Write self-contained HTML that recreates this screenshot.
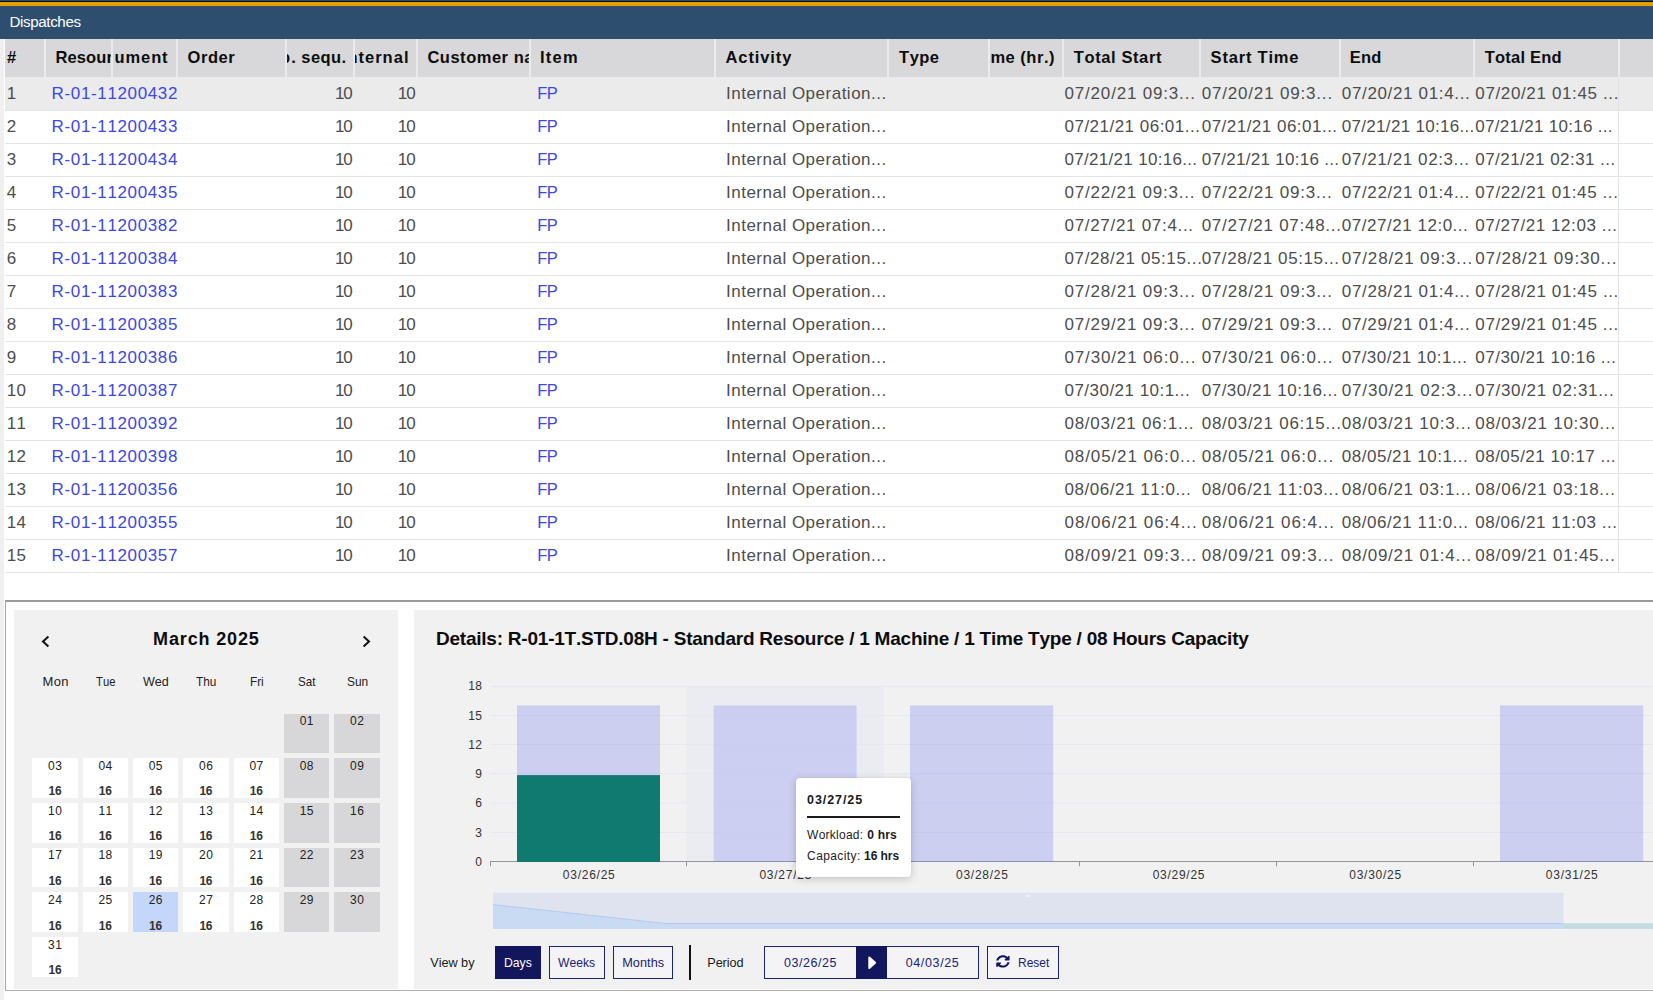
<!DOCTYPE html>
<html lang="en">
<head>
<meta charset="utf-8">
<title>Dispatches</title>
<style>
html,body{margin:0;padding:0;overflow:hidden;}
body{width:1653px;height:1000px;position:relative;overflow:hidden;background:#fff;font-family:"Liberation Sans",sans-serif;}
.a{position:absolute;}
.t{position:absolute;white-space:nowrap;line-height:1;font-kerning:none;}
.c{position:absolute;overflow:hidden;}
.c .t{position:absolute;}
#strip{left:0;top:39px;width:4px;height:961px;background:#f0f0f0;}
#bar0{left:0;top:0;width:1653px;height:1px;background:#2e4a66;}
#bar1{left:0;top:1px;width:1653px;height:1px;background:#0a0a0a;}
#bar2{left:0;top:2px;width:1653px;height:4px;background:#e59e00;}
#bar3{left:0;top:6px;width:1653px;height:33px;background:#2d4e6e;}
#title{left:9.5px;top:13.9px;font-size:15.2px;color:#fff;letter-spacing:-0.4px;line-height:1;white-space:nowrap;}
#hdr{left:5px;top:39px;width:1648px;height:38px;background:#d8d8da;}
.sep{position:absolute;top:39px;width:2px;height:38px;background:#ebebec;}
.row{position:absolute;left:5px;width:1648px;height:33px;}
.row.hl{background:#ebebeb;}
.rl{position:absolute;left:5px;width:1648px;height:1px;background:#e5e5e5;}
#vline{left:1618px;top:77px;width:1px;height:496px;background:#e2e2e2;}
#panel{left:5px;top:600px;width:1647px;height:388px;border-top:2px solid #9a9a9a;border-left:1px solid #a6a6a6;border-bottom:1px solid #b0b0b0;background:#fff;}
#cal{left:14px;top:610px;width:384px;height:379px;background:#f1f1f1;}
#chart{left:414px;top:610px;width:1239px;height:379px;background:#f1f1f1;}
.cc{position:absolute;width:45.4px;height:39.7px;background:#fff;}
.cc.we{background:#d7d7d9;}
.cc.sel{background:#c5d6fb;}
.btn{position:absolute;top:946px;height:31px;border:1px solid #1a2272;background:#f4f4f6;}
</style>
</head>
<body>
<div class="a" id="bar0"></div><div class="a" id="bar1"></div><div class="a" id="bar2"></div><div class="a" id="bar3"></div>
<div class="a" id="title">Dispatches</div>
<div class="a" id="strip"></div>
<div class="a" id="hdr"></div>
<div class="sep" style="left:44px"></div>
<div class="sep" style="left:111px"></div>
<div class="sep" style="left:176px"></div>
<div class="sep" style="left:285px"></div>
<div class="sep" style="left:353px"></div>
<div class="sep" style="left:416px"></div>
<div class="sep" style="left:529px"></div>
<div class="sep" style="left:714px"></div>
<div class="sep" style="left:887px"></div>
<div class="sep" style="left:988px"></div>
<div class="sep" style="left:1062px"></div>
<div class="sep" style="left:1199px"></div>
<div class="sep" style="left:1339px"></div>
<div class="sep" style="left:1473px"></div>
<div class="sep" style="left:1618px"></div>
<div class="row hl" style="top:77px"></div>
<div class="rl" style="top:110px"></div>
<div class="rl" style="top:143px"></div>
<div class="rl" style="top:176px"></div>
<div class="rl" style="top:209px"></div>
<div class="rl" style="top:242px"></div>
<div class="rl" style="top:275px"></div>
<div class="rl" style="top:308px"></div>
<div class="rl" style="top:341px"></div>
<div class="rl" style="top:374px"></div>
<div class="rl" style="top:407px"></div>
<div class="rl" style="top:440px"></div>
<div class="rl" style="top:473px"></div>
<div class="rl" style="top:506px"></div>
<div class="rl" style="top:539px"></div>
<div class="rl" style="top:572px"></div>
<div class="a" id="vline"></div>

<div class="a" id="panel"></div>
<div class="a" id="cal"></div>
<div class="a" id="chart"></div>
<div class="cc we" style="left:283.95px;top:713.50px"></div>
<div class="cc we" style="left:334.28px;top:713.50px"></div>
<div class="cc" style="left:32.30px;top:758.20px"></div>
<div class="cc" style="left:82.63px;top:758.20px"></div>
<div class="cc" style="left:132.96px;top:758.20px"></div>
<div class="cc" style="left:183.29px;top:758.20px"></div>
<div class="cc" style="left:233.62px;top:758.20px"></div>
<div class="cc we" style="left:283.95px;top:758.20px"></div>
<div class="cc we" style="left:334.28px;top:758.20px"></div>
<div class="cc" style="left:32.30px;top:802.90px"></div>
<div class="cc" style="left:82.63px;top:802.90px"></div>
<div class="cc" style="left:132.96px;top:802.90px"></div>
<div class="cc" style="left:183.29px;top:802.90px"></div>
<div class="cc" style="left:233.62px;top:802.90px"></div>
<div class="cc we" style="left:283.95px;top:802.90px"></div>
<div class="cc we" style="left:334.28px;top:802.90px"></div>
<div class="cc" style="left:32.30px;top:847.60px"></div>
<div class="cc" style="left:82.63px;top:847.60px"></div>
<div class="cc" style="left:132.96px;top:847.60px"></div>
<div class="cc" style="left:183.29px;top:847.60px"></div>
<div class="cc" style="left:233.62px;top:847.60px"></div>
<div class="cc we" style="left:283.95px;top:847.60px"></div>
<div class="cc we" style="left:334.28px;top:847.60px"></div>
<div class="cc" style="left:32.30px;top:892.30px"></div>
<div class="cc" style="left:82.63px;top:892.30px"></div>
<div class="cc sel" style="left:132.96px;top:892.30px"></div>
<div class="cc" style="left:183.29px;top:892.30px"></div>
<div class="cc" style="left:233.62px;top:892.30px"></div>
<div class="cc we" style="left:283.95px;top:892.30px"></div>
<div class="cc we" style="left:334.28px;top:892.30px"></div>
<div class="cc" style="left:32.30px;top:937.00px"></div>

<!-- calendar chevrons -->
<svg class="a" style="left:38px;top:632px" width="16" height="20" viewBox="0 0 16 20"><path d="M10.4 4.6 L5 9.6 L10.4 14.6" fill="none" stroke="#111" stroke-width="2" stroke-linecap="butt" stroke-linejoin="miter"/></svg>
<svg class="a" style="left:358px;top:632px" width="16" height="20" viewBox="0 0 16 20"><path d="M5.6 4.6 L11 9.6 L5.6 14.6" fill="none" stroke="#111" stroke-width="2" stroke-linecap="butt" stroke-linejoin="miter"/></svg>

<!-- chart svg -->
<svg class="a" style="left:414px;top:610px" width="1239" height="379" viewBox="414 610 1239 379">
  <!-- hover band -->
  <rect x="686.6" y="686" width="197" height="175.5" fill="#ebecf1"/>
  <!-- grid -->
  <g stroke="#e6e9f2" stroke-width="1">
    <line x1="490.5" x2="1653" y1="686.5" y2="686.5"/>
    <line x1="490.5" x2="1653" y1="715.5" y2="715.5"/>
    <line x1="490.5" x2="1653" y1="744.5" y2="744.5"/>
    <line x1="490.5" x2="1653" y1="773.5" y2="773.5"/>
    <line x1="490.5" x2="1653" y1="803" y2="803"/>
    <line x1="490.5" x2="1653" y1="832.5" y2="832.5"/>
  </g>
  <!-- axis -->
  <g stroke="#94959b" stroke-width="1">
    <line x1="490" x2="1653" y1="861.5" y2="861.5"/>
    <line x1="490.5" x2="490.5" y1="861" y2="866.3"/>
    <line x1="686.5" x2="686.5" y1="861" y2="866.3"/>
    <line x1="883.5" x2="883.5" y1="861" y2="866.3"/>
    <line x1="1079.5" x2="1079.5" y1="861" y2="866.3"/>
    <line x1="1276.5" x2="1276.5" y1="861" y2="866.3"/>
    <line x1="1473.5" x2="1473.5" y1="861" y2="866.3"/>
  </g>
  <!-- capacity bars -->
  <g fill="rgba(121,128,241,0.3)">
    <rect x="517" y="705.4" width="143" height="156.6"/>
    <rect x="713.6" y="705.4" width="143" height="156.6" fill="rgba(121,128,241,0.27)"/>
    <rect x="910" y="705.4" width="143.2" height="156.6"/>
    <rect x="1500" y="705.4" width="143.2" height="156.6"/>
  </g>
  <rect x="517" y="775.1" width="143" height="86.9" fill="#107a71"/>
  <!-- slider -->
  <rect x="493" y="892.7" width="1070.6" height="36.2" fill="#dee3ef"/>
  <path d="M493 904.6 L666.5 923.6 L1563.6 923.6 L1563.6 928.9 L493 928.9 Z" fill="#c9dbf2"/>
  <path d="M493 904.6 L666.5 923.6 L1563.6 923.6" fill="none" stroke="#b3c9f3" stroke-width="1"/>
  <rect x="1563.6" y="923.2" width="89.4" height="5.7" fill="#c3dcdf"/>
  <g stroke="#fff" stroke-width="0.6" opacity="0.9"><line x1="1026.6" x2="1026.6" y1="894.6" y2="897"/><line x1="1028" x2="1028" y1="894.6" y2="897"/><line x1="1029.4" x2="1029.4" y1="894.6" y2="897"/></g>
</svg>

<!-- controls -->
<div class="a" style="left:495px;top:946px;width:46px;height:33px;background:#12165c"></div>
<div class="btn" style="left:549px;width:54px"></div>
<div class="btn" style="left:613px;width:58px"></div>
<div class="a" style="left:689px;top:945px;width:2px;height:35px;background:#111"></div>
<div class="btn" style="left:764px;width:213px"></div>
<div class="a" style="left:856px;top:946px;width:31px;height:33px;background:#12165c"></div>
<svg class="a" style="left:864px;top:952px" width="16" height="22" viewBox="0 0 16 22"><path d="M5.3 5.6 L11.1 10.8 L5.3 16 Z" fill="#fff" stroke="#fff" stroke-width="2" stroke-linejoin="round"/></svg>
<div class="btn" style="left:987px;width:70px"></div>
<svg class="a" style="left:996.1px;top:955.4px" width="13.8" height="12.8" viewBox="0 0 512 512" preserveAspectRatio="none"><path fill="#12165c" d="M370.72 133.28C339.458 104.008 298.888 87.962 255.848 88c-77.458.068-144.328 53.178-162.791 126.85-1.344 5.363-6.122 9.15-11.651 9.15H24.103c-7.498 0-13.194-6.807-11.807-14.176C33.933 94.924 134.813 8 256 8c66.448 0 126.791 26.136 171.315 68.685L463.03 40.97C478.149 25.851 504 36.559 504 57.941V192c0 13.255-10.745 24-24 24H345.941c-21.382 0-32.09-25.851-16.971-40.971l41.75-41.749zM32 296h134.059c21.382 0 32.09 25.851 16.971 40.971l-41.75 41.75c31.262 29.273 71.835 45.319 114.876 45.28 77.418-.07 144.315-53.144 162.787-126.849 1.344-5.363 6.122-9.15 11.651-9.15h57.304c7.498 0 13.194 6.807 11.807 14.176C478.067 417.076 377.187 504 256 504c-66.448 0-126.791-26.136-171.315-68.685L48.97 471.03C33.851 486.149 8 475.441 8 454.059V320c0-13.255 10.745-24 24-24z"/></svg>

<span id="t0" class="t" style="font-size:16.5px;font-weight:700;color:#0d0d0d;letter-spacing:0.312px;left:7.00px;top:49.33px;">#</span>
<div class="c" style="left:46.00px;top:49.33px;width:65.00px;height:21.45px"><span id="t1" class="t" style="font-size:16.5px;font-weight:700;color:#0d0d0d;letter-spacing:0.120px;left:9.40px;top:0">Resource</span></div>
<span id="t2" class="t" style="font-size:16.5px;font-weight:700;color:#0d0d0d;letter-spacing:0.875px;left:114.60px;top:49.33px;">ument</span>
<span id="t3" class="t" style="font-size:16.5px;font-weight:700;color:#0d0d0d;letter-spacing:0.566px;left:187.50px;top:49.33px;">Order</span>
<span id="t4" class="t" style="font-size:16.5px;font-weight:700;color:#0d0d0d;letter-spacing:0.439px;left:291.30px;top:49.33px;">. sequ.</span>
<div class="c" style="left:287.20px;top:49.33px;width:4.80px;height:21.45px"><span id="t5" class="t" style="font-size:16.5px;font-weight:700;color:#0d0d0d;right:2.00px;top:0">p</span></div>
<span id="t6" class="t" style="font-size:16.5px;font-weight:700;color:#0d0d0d;letter-spacing:1.033px;left:358.40px;top:49.33px;">ternal</span>
<div class="c" style="left:355.40px;top:49.33px;width:3.60px;height:21.45px"><span id="t7" class="t" style="font-size:16.5px;font-weight:700;color:#0d0d0d;right:1.40px;top:0">n</span></div>
<div class="c" style="left:418.00px;top:49.33px;width:111.40px;height:21.45px"><span id="t8" class="t" style="font-size:16.5px;font-weight:700;color:#0d0d0d;letter-spacing:0.520px;left:9.40px;top:0">Customer name</span></div>
<span id="t9" class="t" style="font-size:16.5px;font-weight:700;color:#0d0d0d;letter-spacing:1.254px;left:539.90px;top:49.33px;">Item</span>
<span id="t10" class="t" style="font-size:16.5px;font-weight:700;color:#0d0d0d;letter-spacing:0.899px;left:725.50px;top:49.33px;">Activity</span>
<span id="t11" class="t" style="font-size:16.5px;font-weight:700;color:#0d0d0d;letter-spacing:0.461px;left:899.10px;top:49.33px;">Type</span>
<span id="t12" class="t" style="font-size:16.5px;font-weight:700;color:#0d0d0d;letter-spacing:0.512px;left:990.40px;top:49.33px;">me (hr.)</span>
<span id="t13" class="t" style="font-size:16.5px;font-weight:700;color:#0d0d0d;letter-spacing:0.601px;left:1073.80px;top:49.33px;">Total Start</span>
<span id="t14" class="t" style="font-size:16.5px;font-weight:700;color:#0d0d0d;letter-spacing:0.801px;left:1210.60px;top:49.33px;">Start Time</span>
<span id="t15" class="t" style="font-size:16.5px;font-weight:700;color:#0d0d0d;letter-spacing:0.164px;left:1349.80px;top:49.33px;">End</span>
<span id="t16" class="t" style="font-size:16.5px;font-weight:700;color:#0d0d0d;letter-spacing:0.191px;left:1484.80px;top:49.33px;">Total End</span>
<span id="t17" class="t" style="font-size:17px;color:#4d4d4d;letter-spacing:0.400px;left:6.70px;top:84.61px;">1</span>
<span id="t18" class="t" style="font-size:17px;color:#3d46e6;letter-spacing:0.637px;left:51.60px;top:84.61px;">R-01-11200432</span>
<span id="t19" class="t" style="font-size:17px;color:#4d4d4d;letter-spacing:-1.122px;right:1301.32px;top:84.61px;">10</span>
<span id="t20" class="t" style="font-size:17px;color:#4d4d4d;letter-spacing:-1.122px;right:1238.52px;top:84.61px;">10</span>
<span id="t21" class="t" style="font-size:16.5px;color:#3d46e6;letter-spacing:-0.400px;left:537.20px;top:85.03px;">FP</span>
<span id="t22" class="t" style="font-size:17px;color:#4d4d4d;letter-spacing:0.497px;left:726.00px;top:84.61px;">Internal Operation...</span>
<span id="t23" class="t" style="font-size:17px;color:#4d4d4d;letter-spacing:0.818px;left:1064.50px;top:84.61px;">07/20/21 09:3...</span>
<span id="t24" class="t" style="font-size:17px;color:#4d4d4d;letter-spacing:0.818px;left:1201.70px;top:84.61px;">07/20/21 09:3...</span>
<span id="t25" class="t" style="font-size:17px;color:#4d4d4d;letter-spacing:0.655px;left:1341.80px;top:84.61px;">07/20/21 01:4...</span>
<span id="t26" class="t" style="font-size:17px;color:#4d4d4d;letter-spacing:0.633px;left:1475.30px;top:84.61px;">07/20/21 01:45 ...</span>
<span id="t27" class="t" style="font-size:17px;color:#4d4d4d;letter-spacing:0.400px;left:6.70px;top:117.61px;">2</span>
<span id="t28" class="t" style="font-size:17px;color:#3d46e6;letter-spacing:0.637px;left:51.60px;top:117.61px;">R-01-11200433</span>
<span id="t29" class="t" style="font-size:17px;color:#4d4d4d;letter-spacing:-1.122px;right:1301.32px;top:117.61px;">10</span>
<span id="t30" class="t" style="font-size:17px;color:#4d4d4d;letter-spacing:-1.122px;right:1238.52px;top:117.61px;">10</span>
<span id="t31" class="t" style="font-size:16.5px;color:#3d46e6;letter-spacing:-0.400px;left:537.20px;top:118.03px;">FP</span>
<span id="t32" class="t" style="font-size:17px;color:#4d4d4d;letter-spacing:0.497px;left:726.00px;top:117.61px;">Internal Operation...</span>
<span id="t33" class="t" style="font-size:17px;color:#4d4d4d;letter-spacing:0.486px;left:1064.50px;top:117.61px;">07/21/21 06:01...</span>
<span id="t34" class="t" style="font-size:17px;color:#4d4d4d;letter-spacing:0.486px;left:1201.70px;top:117.61px;">07/21/21 06:01...</span>
<span id="t35" class="t" style="font-size:17px;color:#4d4d4d;letter-spacing:0.304px;left:1341.80px;top:117.61px;">07/21/21 10:16...</span>
<span id="t36" class="t" style="font-size:17px;color:#4d4d4d;letter-spacing:0.292px;left:1475.30px;top:117.61px;">07/21/21 10:16 ...</span>
<span id="t37" class="t" style="font-size:17px;color:#4d4d4d;letter-spacing:0.400px;left:6.70px;top:150.61px;">3</span>
<span id="t38" class="t" style="font-size:17px;color:#3d46e6;letter-spacing:0.637px;left:51.60px;top:150.61px;">R-01-11200434</span>
<span id="t39" class="t" style="font-size:17px;color:#4d4d4d;letter-spacing:-1.122px;right:1301.32px;top:150.61px;">10</span>
<span id="t40" class="t" style="font-size:17px;color:#4d4d4d;letter-spacing:-1.122px;right:1238.52px;top:150.61px;">10</span>
<span id="t41" class="t" style="font-size:16.5px;color:#3d46e6;letter-spacing:-0.400px;left:537.20px;top:151.03px;">FP</span>
<span id="t42" class="t" style="font-size:17px;color:#4d4d4d;letter-spacing:0.497px;left:726.00px;top:150.61px;">Internal Operation...</span>
<span id="t43" class="t" style="font-size:17px;color:#4d4d4d;letter-spacing:0.304px;left:1064.50px;top:150.61px;">07/21/21 10:16...</span>
<span id="t44" class="t" style="font-size:17px;color:#4d4d4d;letter-spacing:0.292px;left:1201.70px;top:150.61px;">07/21/21 10:16 ...</span>
<span id="t45" class="t" style="font-size:17px;color:#4d4d4d;letter-spacing:0.601px;left:1341.80px;top:150.61px;">07/21/21 02:3...</span>
<span id="t46" class="t" style="font-size:17px;color:#4d4d4d;letter-spacing:0.443px;left:1475.30px;top:150.61px;">07/21/21 02:31 ...</span>
<span id="t47" class="t" style="font-size:17px;color:#4d4d4d;letter-spacing:0.400px;left:6.70px;top:183.61px;">4</span>
<span id="t48" class="t" style="font-size:17px;color:#3d46e6;letter-spacing:0.637px;left:51.60px;top:183.61px;">R-01-11200435</span>
<span id="t49" class="t" style="font-size:17px;color:#4d4d4d;letter-spacing:-1.122px;right:1301.32px;top:183.61px;">10</span>
<span id="t50" class="t" style="font-size:17px;color:#4d4d4d;letter-spacing:-1.122px;right:1238.52px;top:183.61px;">10</span>
<span id="t51" class="t" style="font-size:16.5px;color:#3d46e6;letter-spacing:-0.400px;left:537.20px;top:184.03px;">FP</span>
<span id="t52" class="t" style="font-size:17px;color:#4d4d4d;letter-spacing:0.497px;left:726.00px;top:183.61px;">Internal Operation...</span>
<span id="t53" class="t" style="font-size:17px;color:#4d4d4d;letter-spacing:0.786px;left:1064.50px;top:183.61px;">07/22/21 09:3...</span>
<span id="t54" class="t" style="font-size:17px;color:#4d4d4d;letter-spacing:0.786px;left:1201.70px;top:183.61px;">07/22/21 09:3...</span>
<span id="t55" class="t" style="font-size:17px;color:#4d4d4d;letter-spacing:0.623px;left:1341.80px;top:183.61px;">07/22/21 01:4...</span>
<span id="t56" class="t" style="font-size:17px;color:#4d4d4d;letter-spacing:0.605px;left:1475.30px;top:183.61px;">07/22/21 01:45 ...</span>
<span id="t57" class="t" style="font-size:17px;color:#4d4d4d;letter-spacing:0.400px;left:6.70px;top:216.61px;">5</span>
<span id="t58" class="t" style="font-size:17px;color:#3d46e6;letter-spacing:0.637px;left:51.60px;top:216.61px;">R-01-11200382</span>
<span id="t59" class="t" style="font-size:17px;color:#4d4d4d;letter-spacing:-1.122px;right:1301.32px;top:216.61px;">10</span>
<span id="t60" class="t" style="font-size:17px;color:#4d4d4d;letter-spacing:-1.122px;right:1238.52px;top:216.61px;">10</span>
<span id="t61" class="t" style="font-size:16.5px;color:#3d46e6;letter-spacing:-0.400px;left:537.20px;top:217.03px;">FP</span>
<span id="t62" class="t" style="font-size:17px;color:#4d4d4d;letter-spacing:0.497px;left:726.00px;top:216.61px;">Internal Operation...</span>
<span id="t63" class="t" style="font-size:17px;color:#4d4d4d;letter-spacing:0.696px;left:1064.50px;top:216.61px;">07/27/21 07:4...</span>
<span id="t64" class="t" style="font-size:17px;color:#4d4d4d;letter-spacing:0.730px;left:1201.70px;top:216.61px;">07/27/21 07:48...</span>
<span id="t65" class="t" style="font-size:17px;color:#4d4d4d;letter-spacing:0.525px;left:1341.80px;top:216.61px;">07/27/21 12:0...</span>
<span id="t66" class="t" style="font-size:17px;color:#4d4d4d;letter-spacing:0.547px;left:1475.30px;top:216.61px;">07/27/21 12:03 ...</span>
<span id="t67" class="t" style="font-size:17px;color:#4d4d4d;letter-spacing:0.400px;left:6.70px;top:249.61px;">6</span>
<span id="t68" class="t" style="font-size:17px;color:#3d46e6;letter-spacing:0.637px;left:51.60px;top:249.61px;">R-01-11200384</span>
<span id="t69" class="t" style="font-size:17px;color:#4d4d4d;letter-spacing:-1.122px;right:1301.32px;top:249.61px;">10</span>
<span id="t70" class="t" style="font-size:17px;color:#4d4d4d;letter-spacing:-1.122px;right:1238.52px;top:249.61px;">10</span>
<span id="t71" class="t" style="font-size:16.5px;color:#3d46e6;letter-spacing:-0.400px;left:537.20px;top:250.03px;">FP</span>
<span id="t72" class="t" style="font-size:17px;color:#4d4d4d;letter-spacing:0.497px;left:726.00px;top:249.61px;">Internal Operation...</span>
<span id="t73" class="t" style="font-size:17px;color:#4d4d4d;letter-spacing:0.611px;left:1064.50px;top:249.61px;">07/28/21 05:15...</span>
<span id="t74" class="t" style="font-size:17px;color:#4d4d4d;letter-spacing:0.611px;left:1201.70px;top:249.61px;">07/28/21 05:15...</span>
<span id="t75" class="t" style="font-size:17px;color:#4d4d4d;letter-spacing:0.813px;left:1341.80px;top:249.61px;">07/28/21 09:3...</span>
<span id="t76" class="t" style="font-size:17px;color:#4d4d4d;letter-spacing:0.845px;left:1475.30px;top:249.61px;">07/28/21 09:30...</span>
<span id="t77" class="t" style="font-size:17px;color:#4d4d4d;letter-spacing:0.400px;left:6.70px;top:282.61px;">7</span>
<span id="t78" class="t" style="font-size:17px;color:#3d46e6;letter-spacing:0.637px;left:51.60px;top:282.61px;">R-01-11200383</span>
<span id="t79" class="t" style="font-size:17px;color:#4d4d4d;letter-spacing:-1.122px;right:1301.32px;top:282.61px;">10</span>
<span id="t80" class="t" style="font-size:17px;color:#4d4d4d;letter-spacing:-1.122px;right:1238.52px;top:282.61px;">10</span>
<span id="t81" class="t" style="font-size:16.5px;color:#3d46e6;letter-spacing:-0.400px;left:537.20px;top:283.03px;">FP</span>
<span id="t82" class="t" style="font-size:17px;color:#4d4d4d;letter-spacing:0.497px;left:726.00px;top:282.61px;">Internal Operation...</span>
<span id="t83" class="t" style="font-size:17px;color:#4d4d4d;letter-spacing:0.813px;left:1064.50px;top:282.61px;">07/28/21 09:3...</span>
<span id="t84" class="t" style="font-size:17px;color:#4d4d4d;letter-spacing:0.813px;left:1201.70px;top:282.61px;">07/28/21 09:3...</span>
<span id="t85" class="t" style="font-size:17px;color:#4d4d4d;letter-spacing:0.649px;left:1341.80px;top:282.61px;">07/28/21 01:4...</span>
<span id="t86" class="t" style="font-size:17px;color:#4d4d4d;letter-spacing:0.628px;left:1475.30px;top:282.61px;">07/28/21 01:45 ...</span>
<span id="t87" class="t" style="font-size:17px;color:#4d4d4d;letter-spacing:0.400px;left:6.70px;top:315.61px;">8</span>
<span id="t88" class="t" style="font-size:17px;color:#3d46e6;letter-spacing:0.637px;left:51.60px;top:315.61px;">R-01-11200385</span>
<span id="t89" class="t" style="font-size:17px;color:#4d4d4d;letter-spacing:-1.122px;right:1301.32px;top:315.61px;">10</span>
<span id="t90" class="t" style="font-size:17px;color:#4d4d4d;letter-spacing:-1.122px;right:1238.52px;top:315.61px;">10</span>
<span id="t91" class="t" style="font-size:16.5px;color:#3d46e6;letter-spacing:-0.400px;left:537.20px;top:316.03px;">FP</span>
<span id="t92" class="t" style="font-size:17px;color:#4d4d4d;letter-spacing:0.497px;left:726.00px;top:315.61px;">Internal Operation...</span>
<span id="t93" class="t" style="font-size:17px;color:#4d4d4d;letter-spacing:0.809px;left:1064.50px;top:315.61px;">07/29/21 09:3...</span>
<span id="t94" class="t" style="font-size:17px;color:#4d4d4d;letter-spacing:0.809px;left:1201.70px;top:315.61px;">07/29/21 09:3...</span>
<span id="t95" class="t" style="font-size:17px;color:#4d4d4d;letter-spacing:0.646px;left:1341.80px;top:315.61px;">07/29/21 01:4...</span>
<span id="t96" class="t" style="font-size:17px;color:#4d4d4d;letter-spacing:0.625px;left:1475.30px;top:315.61px;">07/29/21 01:45 ...</span>
<span id="t97" class="t" style="font-size:17px;color:#4d4d4d;letter-spacing:0.400px;left:6.70px;top:348.61px;">9</span>
<span id="t98" class="t" style="font-size:17px;color:#3d46e6;letter-spacing:0.637px;left:51.60px;top:348.61px;">R-01-11200386</span>
<span id="t99" class="t" style="font-size:17px;color:#4d4d4d;letter-spacing:-1.122px;right:1301.32px;top:348.61px;">10</span>
<span id="t100" class="t" style="font-size:17px;color:#4d4d4d;letter-spacing:-1.122px;right:1238.52px;top:348.61px;">10</span>
<span id="t101" class="t" style="font-size:16.5px;color:#3d46e6;letter-spacing:-0.400px;left:537.20px;top:349.03px;">FP</span>
<span id="t102" class="t" style="font-size:17px;color:#4d4d4d;letter-spacing:0.497px;left:726.00px;top:348.61px;">Internal Operation...</span>
<span id="t103" class="t" style="font-size:17px;color:#4d4d4d;letter-spacing:0.850px;left:1064.50px;top:348.61px;">07/30/21 06:0...</span>
<span id="t104" class="t" style="font-size:17px;color:#4d4d4d;letter-spacing:0.850px;left:1201.70px;top:348.61px;">07/30/21 06:0...</span>
<span id="t105" class="t" style="font-size:17px;color:#4d4d4d;letter-spacing:0.471px;left:1341.80px;top:348.61px;">07/30/21 10:1...</span>
<span id="t106" class="t" style="font-size:17px;color:#4d4d4d;letter-spacing:0.491px;left:1475.30px;top:348.61px;">07/30/21 10:16 ...</span>
<span id="t107" class="t" style="font-size:17px;color:#4d4d4d;letter-spacing:0.400px;left:6.70px;top:381.61px;">10</span>
<span id="t108" class="t" style="font-size:17px;color:#3d46e6;letter-spacing:0.637px;left:51.60px;top:381.61px;">R-01-11200387</span>
<span id="t109" class="t" style="font-size:17px;color:#4d4d4d;letter-spacing:-1.122px;right:1301.32px;top:381.61px;">10</span>
<span id="t110" class="t" style="font-size:17px;color:#4d4d4d;letter-spacing:-1.122px;right:1238.52px;top:381.61px;">10</span>
<span id="t111" class="t" style="font-size:16.5px;color:#3d46e6;letter-spacing:-0.400px;left:537.20px;top:382.03px;">FP</span>
<span id="t112" class="t" style="font-size:17px;color:#4d4d4d;letter-spacing:0.497px;left:726.00px;top:381.61px;">Internal Operation...</span>
<span id="t113" class="t" style="font-size:17px;color:#4d4d4d;letter-spacing:0.471px;left:1064.50px;top:381.61px;">07/30/21 10:1...</span>
<span id="t114" class="t" style="font-size:17px;color:#4d4d4d;letter-spacing:0.516px;left:1201.70px;top:381.61px;">07/30/21 10:16...</span>
<span id="t115" class="t" style="font-size:17px;color:#4d4d4d;letter-spacing:0.827px;left:1341.80px;top:381.61px;">07/30/21 02:3...</span>
<span id="t116" class="t" style="font-size:17px;color:#4d4d4d;letter-spacing:0.677px;left:1475.30px;top:381.61px;">07/30/21 02:31...</span>
<span id="t117" class="t" style="font-size:17px;color:#4d4d4d;letter-spacing:0.400px;left:6.70px;top:414.61px;">11</span>
<span id="t118" class="t" style="font-size:17px;color:#3d46e6;letter-spacing:0.637px;left:51.60px;top:414.61px;">R-01-11200392</span>
<span id="t119" class="t" style="font-size:17px;color:#4d4d4d;letter-spacing:-1.122px;right:1301.32px;top:414.61px;">10</span>
<span id="t120" class="t" style="font-size:17px;color:#4d4d4d;letter-spacing:-1.122px;right:1238.52px;top:414.61px;">10</span>
<span id="t121" class="t" style="font-size:16.5px;color:#3d46e6;letter-spacing:-0.400px;left:537.20px;top:415.03px;">FP</span>
<span id="t122" class="t" style="font-size:17px;color:#4d4d4d;letter-spacing:0.497px;left:726.00px;top:414.61px;">Internal Operation...</span>
<span id="t123" class="t" style="font-size:17px;color:#4d4d4d;letter-spacing:0.727px;left:1064.50px;top:414.61px;">08/03/21 06:1...</span>
<span id="t124" class="t" style="font-size:17px;color:#4d4d4d;letter-spacing:0.734px;left:1201.70px;top:414.61px;">08/03/21 06:15...</span>
<span id="t125" class="t" style="font-size:17px;color:#4d4d4d;letter-spacing:0.736px;left:1341.80px;top:414.61px;">08/03/21 10:3...</span>
<span id="t126" class="t" style="font-size:17px;color:#4d4d4d;letter-spacing:0.773px;left:1475.30px;top:414.61px;">08/03/21 10:30...</span>
<span id="t127" class="t" style="font-size:17px;color:#4d4d4d;letter-spacing:0.400px;left:6.70px;top:447.61px;">12</span>
<span id="t128" class="t" style="font-size:17px;color:#3d46e6;letter-spacing:0.637px;left:51.60px;top:447.61px;">R-01-11200398</span>
<span id="t129" class="t" style="font-size:17px;color:#4d4d4d;letter-spacing:-1.122px;right:1301.32px;top:447.61px;">10</span>
<span id="t130" class="t" style="font-size:17px;color:#4d4d4d;letter-spacing:-1.122px;right:1238.52px;top:447.61px;">10</span>
<span id="t131" class="t" style="font-size:16.5px;color:#3d46e6;letter-spacing:-0.400px;left:537.20px;top:448.03px;">FP</span>
<span id="t132" class="t" style="font-size:17px;color:#4d4d4d;letter-spacing:0.497px;left:726.00px;top:447.61px;">Internal Operation...</span>
<span id="t133" class="t" style="font-size:17px;color:#4d4d4d;letter-spacing:0.889px;left:1064.50px;top:447.61px;">08/05/21 06:0...</span>
<span id="t134" class="t" style="font-size:17px;color:#4d4d4d;letter-spacing:0.889px;left:1201.70px;top:447.61px;">08/05/21 06:0...</span>
<span id="t135" class="t" style="font-size:17px;color:#4d4d4d;letter-spacing:0.510px;left:1341.80px;top:447.61px;">08/05/21 10:1...</span>
<span id="t136" class="t" style="font-size:17px;color:#4d4d4d;letter-spacing:0.466px;left:1475.30px;top:447.61px;">08/05/21 10:17 ...</span>
<span id="t137" class="t" style="font-size:17px;color:#4d4d4d;letter-spacing:0.400px;left:6.70px;top:480.61px;">13</span>
<span id="t138" class="t" style="font-size:17px;color:#3d46e6;letter-spacing:0.637px;left:51.60px;top:480.61px;">R-01-11200356</span>
<span id="t139" class="t" style="font-size:17px;color:#4d4d4d;letter-spacing:-1.122px;right:1301.32px;top:480.61px;">10</span>
<span id="t140" class="t" style="font-size:17px;color:#4d4d4d;letter-spacing:-1.122px;right:1238.52px;top:480.61px;">10</span>
<span id="t141" class="t" style="font-size:16.5px;color:#3d46e6;letter-spacing:-0.400px;left:537.20px;top:481.03px;">FP</span>
<span id="t142" class="t" style="font-size:17px;color:#4d4d4d;letter-spacing:0.497px;left:726.00px;top:480.61px;">Internal Operation...</span>
<span id="t143" class="t" style="font-size:17px;color:#4d4d4d;letter-spacing:0.533px;left:1064.50px;top:480.61px;">08/06/21 11:0...</span>
<span id="t144" class="t" style="font-size:17px;color:#4d4d4d;letter-spacing:0.582px;left:1201.70px;top:480.61px;">08/06/21 11:03...</span>
<span id="t145" class="t" style="font-size:17px;color:#4d4d4d;letter-spacing:0.727px;left:1341.80px;top:480.61px;">08/06/21 03:1...</span>
<span id="t146" class="t" style="font-size:17px;color:#4d4d4d;letter-spacing:0.759px;left:1475.30px;top:480.61px;">08/06/21 03:18...</span>
<span id="t147" class="t" style="font-size:17px;color:#4d4d4d;letter-spacing:0.400px;left:6.70px;top:513.61px;">14</span>
<span id="t148" class="t" style="font-size:17px;color:#3d46e6;letter-spacing:0.637px;left:51.60px;top:513.61px;">R-01-11200355</span>
<span id="t149" class="t" style="font-size:17px;color:#4d4d4d;letter-spacing:-1.122px;right:1301.32px;top:513.61px;">10</span>
<span id="t150" class="t" style="font-size:17px;color:#4d4d4d;letter-spacing:-1.122px;right:1238.52px;top:513.61px;">10</span>
<span id="t151" class="t" style="font-size:16.5px;color:#3d46e6;letter-spacing:-0.400px;left:537.20px;top:514.03px;">FP</span>
<span id="t152" class="t" style="font-size:17px;color:#4d4d4d;letter-spacing:0.497px;left:726.00px;top:513.61px;">Internal Operation...</span>
<span id="t153" class="t" style="font-size:17px;color:#4d4d4d;letter-spacing:0.934px;left:1064.50px;top:513.61px;">08/06/21 06:4...</span>
<span id="t154" class="t" style="font-size:17px;color:#4d4d4d;letter-spacing:0.934px;left:1201.70px;top:513.61px;">08/06/21 06:4...</span>
<span id="t155" class="t" style="font-size:17px;color:#4d4d4d;letter-spacing:0.533px;left:1341.80px;top:513.61px;">08/06/21 11:0...</span>
<span id="t156" class="t" style="font-size:17px;color:#4d4d4d;letter-spacing:0.554px;left:1475.30px;top:513.61px;">08/06/21 11:03 ...</span>
<span id="t157" class="t" style="font-size:17px;color:#4d4d4d;letter-spacing:0.400px;left:6.70px;top:546.61px;">15</span>
<span id="t158" class="t" style="font-size:17px;color:#3d46e6;letter-spacing:0.637px;left:51.60px;top:546.61px;">R-01-11200357</span>
<span id="t159" class="t" style="font-size:17px;color:#4d4d4d;letter-spacing:-1.122px;right:1301.32px;top:546.61px;">10</span>
<span id="t160" class="t" style="font-size:17px;color:#4d4d4d;letter-spacing:-1.122px;right:1238.52px;top:546.61px;">10</span>
<span id="t161" class="t" style="font-size:16.5px;color:#3d46e6;letter-spacing:-0.400px;left:537.20px;top:547.03px;">FP</span>
<span id="t162" class="t" style="font-size:17px;color:#4d4d4d;letter-spacing:0.497px;left:726.00px;top:546.61px;">Internal Operation...</span>
<span id="t163" class="t" style="font-size:17px;color:#4d4d4d;letter-spacing:0.912px;left:1064.50px;top:546.61px;">08/09/21 09:3...</span>
<span id="t164" class="t" style="font-size:17px;color:#4d4d4d;letter-spacing:0.912px;left:1201.70px;top:546.61px;">08/09/21 09:3...</span>
<span id="t165" class="t" style="font-size:17px;color:#4d4d4d;letter-spacing:0.749px;left:1341.80px;top:546.61px;">08/09/21 01:4...</span>
<span id="t166" class="t" style="font-size:17px;color:#4d4d4d;letter-spacing:0.755px;left:1475.30px;top:546.61px;">08/09/21 01:45...</span>
<span id="t167" class="t" style="font-size:18px;font-weight:700;color:#0d0d0d;letter-spacing:0.849px;left:153.10px;top:629.86px;">March 2025</span>
<span id="t168" class="t" style="font-size:13px;color:#222;letter-spacing:0.352px;left:42.50px;top:675.00px;">Mon</span>
<span id="t169" class="t" style="font-size:13px;transform:scaleX(0.8658);transform-origin:0 50%;color:#222;left:96.07px;top:675.00px;">Tue</span>
<span id="t170" class="t" style="font-size:13px;transform:scaleX(0.9650);transform-origin:0 50%;color:#222;left:143.14px;top:675.00px;">Wed</span>
<span id="t171" class="t" style="font-size:13px;transform:scaleX(0.9060);transform-origin:0 50%;color:#222;left:196.16px;top:675.00px;">Thu</span>
<span id="t172" class="t" style="font-size:13px;transform:scaleX(0.9030);transform-origin:0 50%;color:#222;left:249.73px;top:675.00px;">Fri</span>
<span id="t173" class="t" style="font-size:13px;transform:scaleX(0.8967);transform-origin:0 50%;color:#222;left:298.10px;top:675.00px;">Sat</span>
<span id="t174" class="t" style="font-size:13px;transform:scaleX(0.9161);transform-origin:0 50%;color:#222;left:346.52px;top:675.00px;">Sun</span>
<span id="t175" class="t" style="font-size:12px;color:#222;letter-spacing:0.450px;left:306.88px;transform:translateX(-50%);top:715.14px;">01</span>
<span id="t176" class="t" style="font-size:12px;color:#222;letter-spacing:0.450px;left:357.21px;transform:translateX(-50%);top:715.14px;">02</span>
<span id="t177" class="t" style="font-size:12px;color:#222;letter-spacing:0.450px;left:55.23px;transform:translateX(-50%);top:759.84px;">03</span>
<span id="t178" class="t" style="font-size:12px;font-weight:700;color:#333;letter-spacing:-0.200px;left:54.90px;transform:translateX(-50%);top:785.44px;">16</span>
<span id="t179" class="t" style="font-size:12px;color:#222;letter-spacing:0.450px;left:105.55px;transform:translateX(-50%);top:759.84px;">04</span>
<span id="t180" class="t" style="font-size:12px;font-weight:700;color:#333;letter-spacing:-0.200px;left:105.23px;transform:translateX(-50%);top:785.44px;">16</span>
<span id="t181" class="t" style="font-size:12px;color:#222;letter-spacing:0.450px;left:155.88px;transform:translateX(-50%);top:759.84px;">05</span>
<span id="t182" class="t" style="font-size:12px;font-weight:700;color:#333;letter-spacing:-0.200px;left:155.56px;transform:translateX(-50%);top:785.44px;">16</span>
<span id="t183" class="t" style="font-size:12px;color:#222;letter-spacing:0.450px;left:206.22px;transform:translateX(-50%);top:759.84px;">06</span>
<span id="t184" class="t" style="font-size:12px;font-weight:700;color:#333;letter-spacing:-0.200px;left:205.89px;transform:translateX(-50%);top:785.44px;">16</span>
<span id="t185" class="t" style="font-size:12px;color:#222;letter-spacing:0.450px;left:256.55px;transform:translateX(-50%);top:759.84px;">07</span>
<span id="t186" class="t" style="font-size:12px;font-weight:700;color:#333;letter-spacing:-0.200px;left:256.22px;transform:translateX(-50%);top:785.44px;">16</span>
<span id="t187" class="t" style="font-size:12px;color:#222;letter-spacing:0.450px;left:306.88px;transform:translateX(-50%);top:759.84px;">08</span>
<span id="t188" class="t" style="font-size:12px;color:#222;letter-spacing:0.450px;left:357.21px;transform:translateX(-50%);top:759.84px;">09</span>
<span id="t189" class="t" style="font-size:12px;color:#222;letter-spacing:0.450px;left:55.23px;transform:translateX(-50%);top:804.54px;">10</span>
<span id="t190" class="t" style="font-size:12px;font-weight:700;color:#333;letter-spacing:-0.200px;left:54.90px;transform:translateX(-50%);top:830.14px;">16</span>
<span id="t191" class="t" style="font-size:12px;color:#222;letter-spacing:0.450px;left:105.55px;transform:translateX(-50%);top:804.54px;">11</span>
<span id="t192" class="t" style="font-size:12px;font-weight:700;color:#333;letter-spacing:-0.200px;left:105.23px;transform:translateX(-50%);top:830.14px;">16</span>
<span id="t193" class="t" style="font-size:12px;color:#222;letter-spacing:0.450px;left:155.88px;transform:translateX(-50%);top:804.54px;">12</span>
<span id="t194" class="t" style="font-size:12px;font-weight:700;color:#333;letter-spacing:-0.200px;left:155.56px;transform:translateX(-50%);top:830.14px;">16</span>
<span id="t195" class="t" style="font-size:12px;color:#222;letter-spacing:0.450px;left:206.22px;transform:translateX(-50%);top:804.54px;">13</span>
<span id="t196" class="t" style="font-size:12px;font-weight:700;color:#333;letter-spacing:-0.200px;left:205.89px;transform:translateX(-50%);top:830.14px;">16</span>
<span id="t197" class="t" style="font-size:12px;color:#222;letter-spacing:0.450px;left:256.55px;transform:translateX(-50%);top:804.54px;">14</span>
<span id="t198" class="t" style="font-size:12px;font-weight:700;color:#333;letter-spacing:-0.200px;left:256.22px;transform:translateX(-50%);top:830.14px;">16</span>
<span id="t199" class="t" style="font-size:12px;color:#222;letter-spacing:0.450px;left:306.88px;transform:translateX(-50%);top:804.54px;">15</span>
<span id="t200" class="t" style="font-size:12px;color:#222;letter-spacing:0.450px;left:357.21px;transform:translateX(-50%);top:804.54px;">16</span>
<span id="t201" class="t" style="font-size:12px;color:#222;letter-spacing:0.450px;left:55.23px;transform:translateX(-50%);top:849.24px;">17</span>
<span id="t202" class="t" style="font-size:12px;font-weight:700;color:#333;letter-spacing:-0.200px;left:54.90px;transform:translateX(-50%);top:874.84px;">16</span>
<span id="t203" class="t" style="font-size:12px;color:#222;letter-spacing:0.450px;left:105.55px;transform:translateX(-50%);top:849.24px;">18</span>
<span id="t204" class="t" style="font-size:12px;font-weight:700;color:#333;letter-spacing:-0.200px;left:105.23px;transform:translateX(-50%);top:874.84px;">16</span>
<span id="t205" class="t" style="font-size:12px;color:#222;letter-spacing:0.450px;left:155.88px;transform:translateX(-50%);top:849.24px;">19</span>
<span id="t206" class="t" style="font-size:12px;font-weight:700;color:#333;letter-spacing:-0.200px;left:155.56px;transform:translateX(-50%);top:874.84px;">16</span>
<span id="t207" class="t" style="font-size:12px;color:#222;letter-spacing:0.450px;left:206.22px;transform:translateX(-50%);top:849.24px;">20</span>
<span id="t208" class="t" style="font-size:12px;font-weight:700;color:#333;letter-spacing:-0.200px;left:205.89px;transform:translateX(-50%);top:874.84px;">16</span>
<span id="t209" class="t" style="font-size:12px;color:#222;letter-spacing:0.450px;left:256.55px;transform:translateX(-50%);top:849.24px;">21</span>
<span id="t210" class="t" style="font-size:12px;font-weight:700;color:#333;letter-spacing:-0.200px;left:256.22px;transform:translateX(-50%);top:874.84px;">16</span>
<span id="t211" class="t" style="font-size:12px;color:#222;letter-spacing:0.450px;left:306.88px;transform:translateX(-50%);top:849.24px;">22</span>
<span id="t212" class="t" style="font-size:12px;color:#222;letter-spacing:0.450px;left:357.21px;transform:translateX(-50%);top:849.24px;">23</span>
<span id="t213" class="t" style="font-size:12px;color:#222;letter-spacing:0.450px;left:55.23px;transform:translateX(-50%);top:893.94px;">24</span>
<span id="t214" class="t" style="font-size:12px;font-weight:700;color:#333;letter-spacing:-0.200px;left:54.90px;transform:translateX(-50%);top:919.54px;">16</span>
<span id="t215" class="t" style="font-size:12px;color:#222;letter-spacing:0.450px;left:105.55px;transform:translateX(-50%);top:893.94px;">25</span>
<span id="t216" class="t" style="font-size:12px;font-weight:700;color:#333;letter-spacing:-0.200px;left:105.23px;transform:translateX(-50%);top:919.54px;">16</span>
<span id="t217" class="t" style="font-size:12px;color:#222;letter-spacing:0.450px;left:155.88px;transform:translateX(-50%);top:893.94px;">26</span>
<span id="t218" class="t" style="font-size:12px;font-weight:700;color:#333;letter-spacing:-0.200px;left:155.56px;transform:translateX(-50%);top:919.54px;">16</span>
<span id="t219" class="t" style="font-size:12px;color:#222;letter-spacing:0.450px;left:206.22px;transform:translateX(-50%);top:893.94px;">27</span>
<span id="t220" class="t" style="font-size:12px;font-weight:700;color:#333;letter-spacing:-0.200px;left:205.89px;transform:translateX(-50%);top:919.54px;">16</span>
<span id="t221" class="t" style="font-size:12px;color:#222;letter-spacing:0.450px;left:256.55px;transform:translateX(-50%);top:893.94px;">28</span>
<span id="t222" class="t" style="font-size:12px;font-weight:700;color:#333;letter-spacing:-0.200px;left:256.22px;transform:translateX(-50%);top:919.54px;">16</span>
<span id="t223" class="t" style="font-size:12px;color:#222;letter-spacing:0.450px;left:306.88px;transform:translateX(-50%);top:893.94px;">29</span>
<span id="t224" class="t" style="font-size:12px;color:#222;letter-spacing:0.450px;left:357.21px;transform:translateX(-50%);top:893.94px;">30</span>
<span id="t225" class="t" style="font-size:12px;color:#222;letter-spacing:0.450px;left:55.23px;transform:translateX(-50%);top:938.64px;">31</span>
<span id="t226" class="t" style="font-size:12px;font-weight:700;color:#333;letter-spacing:-0.200px;left:54.90px;transform:translateX(-50%);top:964.24px;">16</span>
<span id="t227" class="t" style="font-size:19px;font-weight:700;color:#0d0d0d;letter-spacing:-0.228px;left:436.00px;top:628.92px;">Details: R-01-1T.STD.08H - Standard Resource / 1 Machine / 1 Time Type / 08 Hours Capacity</span>
<span id="t228" class="t" style="font-size:12px;color:#333;letter-spacing:0.500px;right:1170.50px;top:856.04px;">0</span>
<span id="t229" class="t" style="font-size:12px;color:#333;letter-spacing:0.500px;right:1170.50px;top:826.74px;">3</span>
<span id="t230" class="t" style="font-size:12px;color:#333;letter-spacing:0.500px;right:1170.50px;top:797.44px;">6</span>
<span id="t231" class="t" style="font-size:12px;color:#333;letter-spacing:0.500px;right:1170.50px;top:768.14px;">9</span>
<span id="t232" class="t" style="font-size:12px;color:#333;letter-spacing:0.500px;right:1170.50px;top:738.84px;">12</span>
<span id="t233" class="t" style="font-size:12px;color:#333;letter-spacing:0.500px;right:1170.50px;top:709.54px;">15</span>
<span id="t234" class="t" style="font-size:12px;color:#333;letter-spacing:0.500px;right:1170.50px;top:680.24px;">18</span>
<span id="t235" class="t" style="font-size:12px;color:#333;letter-spacing:0.740px;left:562.85px;top:869.04px;">03/26/25</span>
<span id="t236" class="t" style="font-size:12px;color:#333;letter-spacing:0.740px;left:759.45px;top:869.04px;">03/27/25</span>
<span id="t237" class="t" style="font-size:12px;color:#333;letter-spacing:0.740px;left:956.05px;top:869.04px;">03/28/25</span>
<span id="t238" class="t" style="font-size:12px;color:#333;letter-spacing:0.740px;left:1152.65px;top:869.04px;">03/29/25</span>
<span id="t239" class="t" style="font-size:12px;color:#333;letter-spacing:0.740px;left:1349.25px;top:869.04px;">03/30/25</span>
<span id="t240" class="t" style="font-size:12px;color:#333;letter-spacing:0.740px;left:1545.85px;top:869.04px;">03/31/25</span>
<span id="t241" class="t" style="font-size:12.7px;color:#1a1a1a;letter-spacing:-0.040px;left:430.30px;top:956.55px;">View by</span>
<span id="t242" class="t" style="font-size:12.7px;transform:scaleX(0.9617);transform-origin:0 50%;color:#ffffff;left:504.30px;top:956.55px;">Days</span>
<span id="t243" class="t" style="font-size:12.7px;transform:scaleX(0.9541);transform-origin:0 50%;color:#1a2272;left:558.40px;top:956.55px;">Weeks</span>
<span id="t244" class="t" style="font-size:12.7px;color:#1a2272;letter-spacing:0.058px;left:622.20px;top:956.55px;">Months</span>
<span id="t245" class="t" style="font-size:12.7px;color:#1a1a1a;letter-spacing:-0.097px;left:707.30px;top:956.55px;">Period</span>
<span id="t246" class="t" style="font-size:12.5px;color:#1a2272;letter-spacing:0.518px;left:784.10px;top:956.72px;">03/26/25</span>
<span id="t247" class="t" style="font-size:12.5px;color:#1a2272;letter-spacing:0.633px;left:905.70px;top:956.72px;">04/03/25</span>
<span id="t248" class="t" style="font-size:12.7px;transform:scaleX(0.9440);transform-origin:0 50%;color:#1a2272;left:1018.40px;top:956.55px;">Reset</span>

<!-- tooltip -->
<div class="a" style="left:796px;top:778px;width:115px;height:99px;background:#fff;border-radius:4px;box-shadow:0 2px 8px rgba(0,0,0,0.18),0 0 2px rgba(0,0,0,0.08)"></div>
<div class="a" style="left:807px;top:816px;width:93px;height:2px;background:#1c1c1c"></div>
<span id="t249" class="t" style="font-size:12.5px;font-weight:700;color:#1a1a1a;letter-spacing:0.904px;left:807.10px;top:793.52px;">03/27/25</span>
<span id="t250" class="t" style="font-size:12px;color:#222;letter-spacing:0.246px;left:807.10px;top:828.94px;">Workload:</span>
<span id="t251" class="t" style="font-size:12px;font-weight:700;color:#1a1a1a;letter-spacing:0.178px;left:867.30px;top:828.94px;">0 hrs</span>
<span id="t252" class="t" style="font-size:12px;color:#222;letter-spacing:0.396px;left:807.10px;top:849.94px;">Capacity:</span>
<span id="t253" class="t" style="font-size:12px;font-weight:700;color:#1a1a1a;letter-spacing:-0.072px;left:864.10px;top:849.94px;">16 hrs</span>
</body>
</html>
